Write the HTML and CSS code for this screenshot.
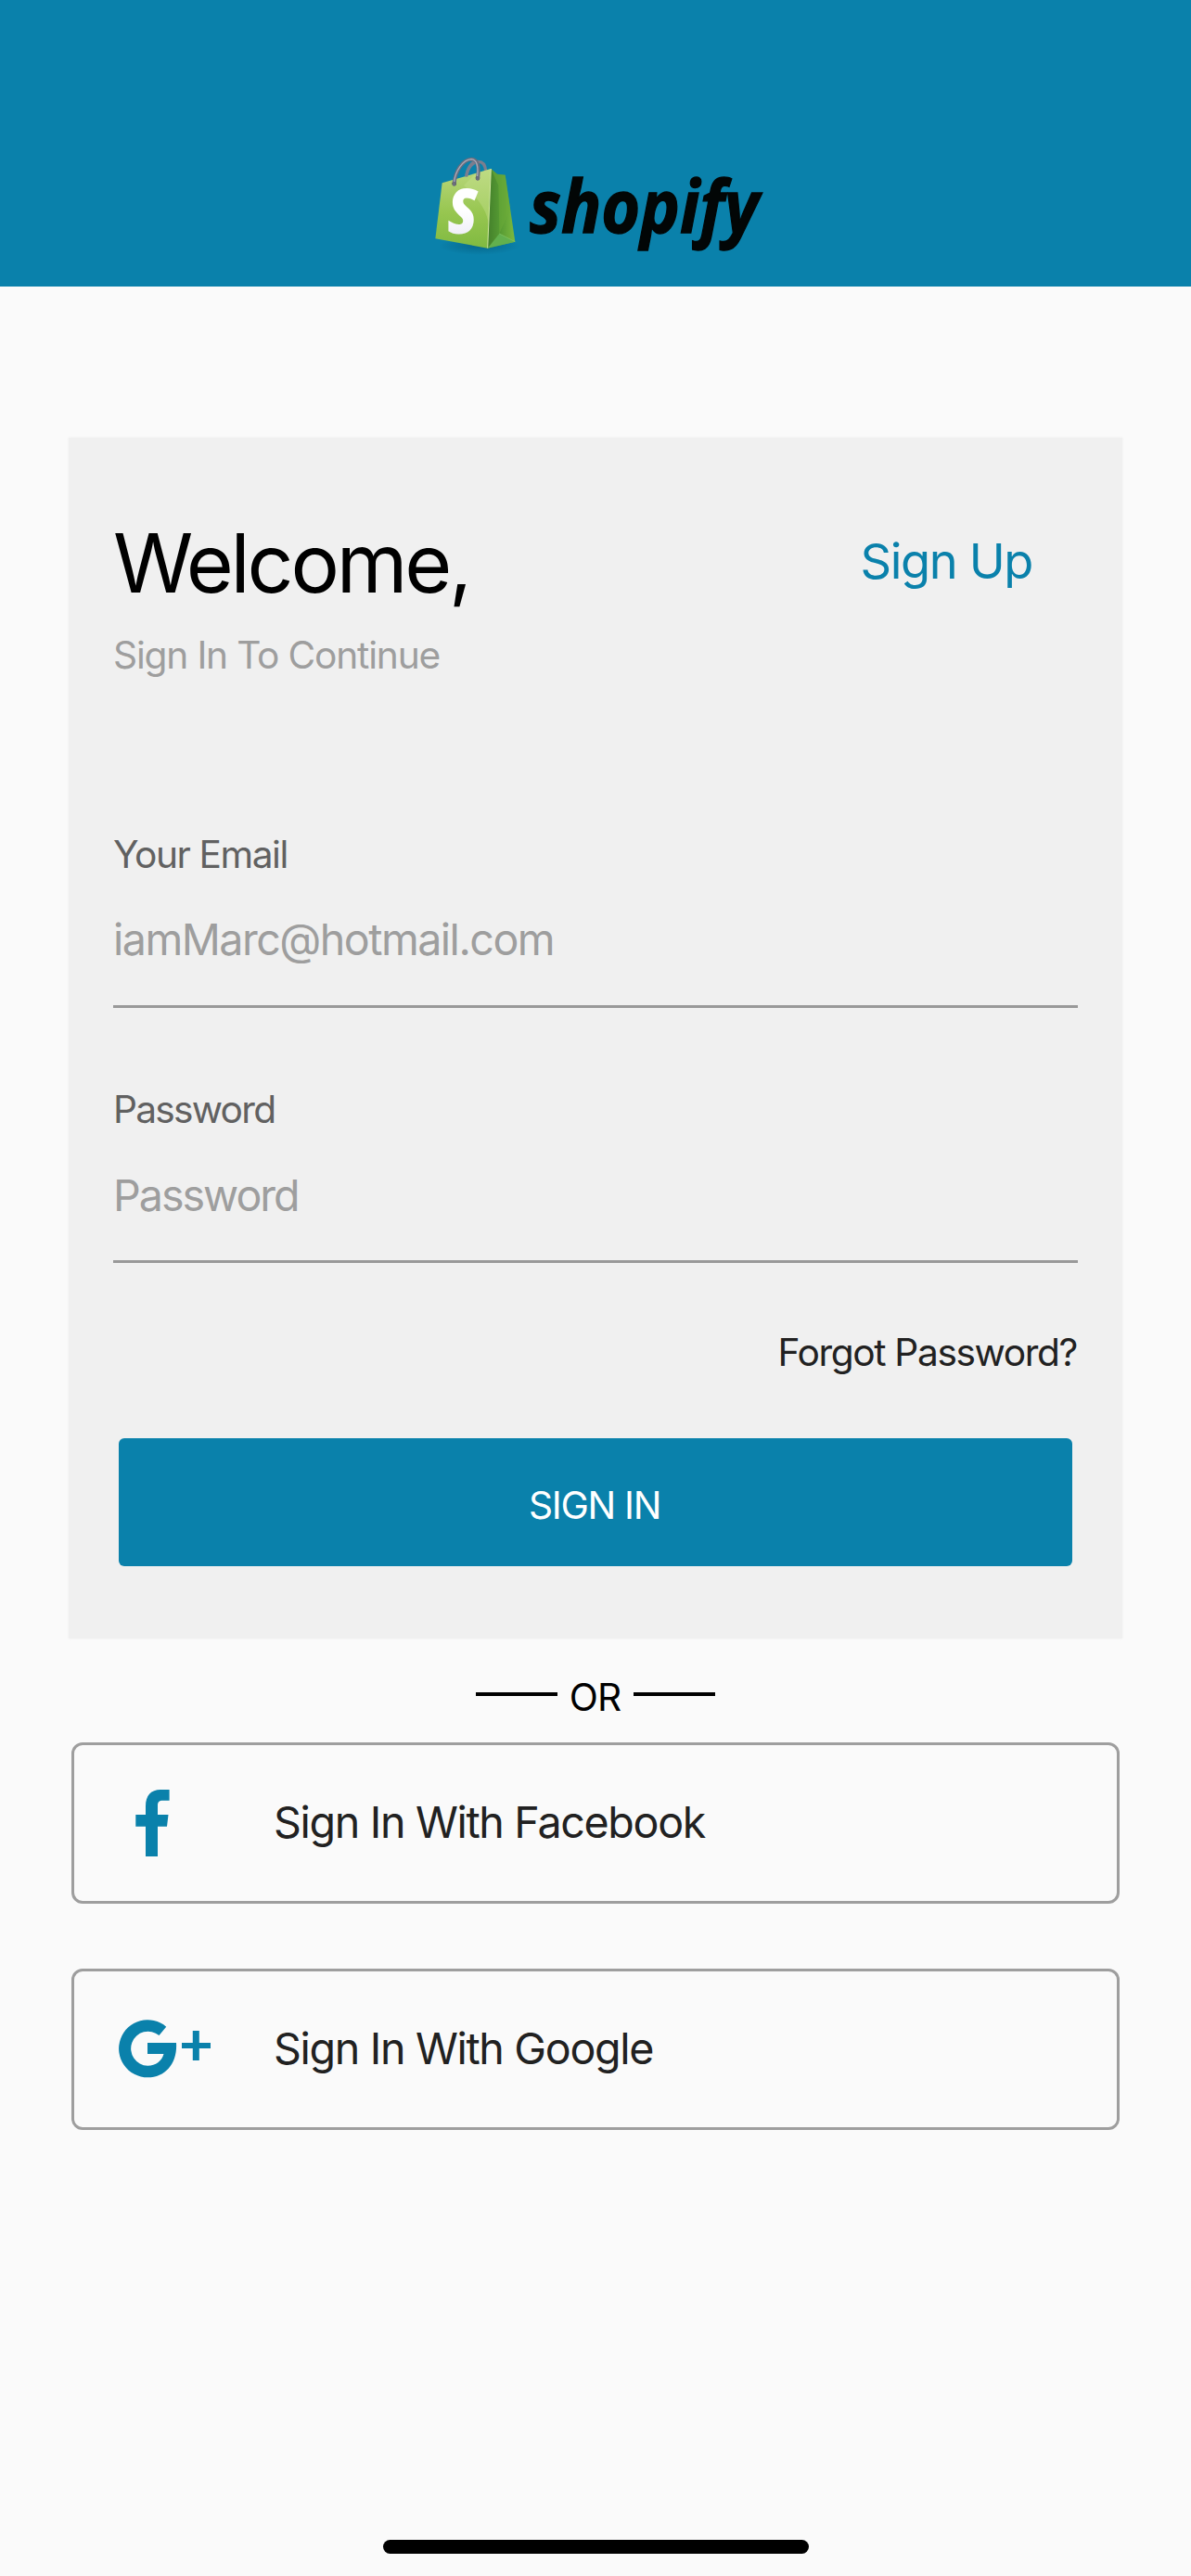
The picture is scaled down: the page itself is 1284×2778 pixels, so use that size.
FILE: index.html
```html
<!DOCTYPE html>
<html lang="en">
<head>
<meta charset="utf-8">
<title>Sign In</title>
<link rel="stylesheet" href="styles.css">
</head>
<body>
<div class="screen">
  <header class="topbar">
    <svg class="logo" viewBox="-24 0 1200 477" role="img" aria-label="shopify">
      <defs>
        <linearGradient id="front" x1="0" y1="0" x2="0" y2="1">
          <stop offset="0" stop-color="#b9d77c"/>
          <stop offset="0.55" stop-color="#97c650"/>
          <stop offset="1" stop-color="#80ba41"/>
        </linearGradient>
        <linearGradient id="side" x1="0" y1="0" x2="1" y2="0">
          <stop offset="0" stop-color="#44802b"/>
          <stop offset="0.45" stop-color="#559a33"/>
          <stop offset="1" stop-color="#7dba3f"/>
        </linearGradient>
        <linearGradient id="letter" x1="0" y1="0" x2="0" y2="1">
          <stop offset="0.5" stop-color="#ffffff"/>
          <stop offset="1" stop-color="#e4e4f2"/>
        </linearGradient>
        <radialGradient id="shade">
          <stop offset="0" stop-color="#04506e" stop-opacity="0.5"/>
          <stop offset="1" stop-color="#04506e" stop-opacity="0"/>
        </radialGradient>
      </defs>
      <ellipse cx="200" cy="345" rx="130" ry="30" fill="url(#shade)"/>
      <path d="M158 122C162 92 180 73 198 73C212 73 219 85 221 102" fill="none" stroke="#7b7e8f" stroke-width="10"/>
      <path d="M80 142L238 96L227 353L58 322Z" fill="url(#front)"/>
      <path d="M150 150C195 190 226 230 231 280L238 96L190 110Z" fill="#c6e08e" opacity="0.4"/>
      <path d="M238 96L258 113L284 116L316 332L227 353Z" fill="url(#side)"/>
      <path d="M238 96L258 113L284 116L300 226L265 306L262 150Z" fill="#6cab38" opacity="0.55"/>
      <path d="M227 353L265 306L316 332Z" fill="#62b04e"/>
      <path d="M265 306L316 332" stroke="#86c765" stroke-width="2"/>
      <path d="M238 96L227 353" stroke="#d5ea9f" stroke-width="3"/>
      <circle cx="119" cy="144" r="7" fill="#3c3434"/>
      <circle cx="195" cy="126" r="7" fill="#3c3434"/>
      <path d="M158 122C161 92 176 73 190 73" fill="none" stroke="#7b7e8f" stroke-width="9"/>
      <path d="M119 146C121 105 146 66 175 65C197 65 200 92 195 128" fill="none" stroke="#6a6d7d" stroke-width="12" stroke-linecap="round"/>
      <path d="M119 138C122 104 147 67 174 65C194 66 197 92 194 120" fill="none" stroke="#a9abba" stroke-width="4"/>
      <text class="bag-letter" x="97" y="307" textLength="98" lengthAdjust="spacingAndGlyphs" fill="url(#letter)">S</text>
      <text class="wordmark" x="363" y="302" textLength="742" lengthAdjust="spacingAndGlyphs">shopify</text>
    </svg>
  </header>

  <main class="content">
    <form class="card">
      <div class="card-head">
        <h1 class="title">Welcome,</h1>
        <a class="signup">Sign Up</a>
      </div>
      <p class="subtitle">Sign In To Continue</p>
      <div class="field">
        <label class="label">Your Email</label>
        <div class="value">iamMarc@hotmail.com</div>
      </div>
      <div class="field">
        <label class="label tight">Password</label>
        <div class="value tight">Password</div>
      </div>
      <a class="forgot">Forgot Password?</a>
      <button type="button" class="submit">SIGN IN</button>
    </form>

    <div class="divider"><span class="rule"></span><span class="or">OR</span><span class="rule"></span></div>

    <button type="button" class="social">
      <svg class="social-icon" viewBox="125 1925 106 80">
        <path fill="#0a81ab" d="M157 2002V1969.700H146.300V1957H157V1948C157 1936 163 1930 173 1930H182.600V1941.700H175.500C171.500 1941.700 170 1943.500 170 1947V1957H181.500L180 1969.700H170V2002Z"/>
      </svg>
      <span class="social-text">Sign In With Facebook</span>
    </button>
    <button type="button" class="social">
      <svg class="social-icon" viewBox="125 2169 106 80">
        <path fill="#0a81ab" d="M159 2203H190C191.500 2224 179 2240.300 159.200 2240.300A31 31 0 1 1 179.200 2185.700L171.500 2195A18.500 18.500 0 1 0 159.200 2227.700C168 2227.700 174.500 2222.500 176.500 2215H159Z"/>
        <path fill="#0a81ab" d="M207.800 2190H214.800V2203H227V2209H214.800V2222H207.800V2209H196V2203H207.800Z"/>
      </svg>
      <span class="social-text">Sign In With Google</span>
    </button>
  </main>

  <div class="home-indicator"></div>
</div>
</body>
</html>
```

FILE: styles.css
```css
* { box-sizing: border-box; }

body {
  margin: 0;
  background: #fafafa;
  font-family: Inter, "Liberation Sans", sans-serif;
  color: #212121;
}

.screen {
  width: 1284px;
  height: 2778px;
  display: flex;
  flex-direction: column;
  overflow: hidden;
}

.topbar {
  height: 309px;
  padding-top: 150px;
  background: #0a81ab;
  display: flex;
  justify-content: center;
}

.logo { width: 400px; height: 159px; overflow: visible; }

.wordmark {
  font: italic 700 235px "Open Sans", "Noto Sans", sans-serif;
  fill: #020606;
  stroke: #020606;
  stroke-width: 4px;
}

.bag-letter { font: italic 800 202px "Open Sans", "Noto Sans", sans-serif; }

.content {
  flex: 1;
  display: flex;
  flex-direction: column;
  padding: 163px 74px 0;
}

.card {
  height: 1295px;
  padding: 82px 48px 78px;
  background: #f0f0f0;
  box-shadow: 0 0 3px #f0f0f0;
  display: flex;
  flex-direction: column;
}

.card-head {
  display: flex;
  justify-content: space-between;
  align-items: center;
  padding-right: 49px;
}

.title {
  margin: 0;
  font-size: 87.6px;
  line-height: 106px;
  letter-spacing: -3.2px;
  font-weight: 400;
  color: #000;
}

.signup {
  margin-bottom: 5px;
  font-size: 52.4px;
  line-height: 64px;
  letter-spacing: -1.4px;
  color: #0a81ab;
}

.subtitle {
  margin: 22px 0 165px;
  font-size: 40.7px;
  line-height: 50px;
  letter-spacing: -1.2px;
  color: #9e9e9e;
}

.field {
  height: 190px;
  border-bottom: 3px solid #999;
}

.field + .field { margin-top: 85px; }

.label {
  display: block;
  font-size: 40.7px;
  line-height: 50px;
  letter-spacing: -1.45px;
  color: #616161;
}

.value {
  margin-top: 37px;
  font-size: 46.6px;
  line-height: 58px;
  letter-spacing: -1.52px;
  color: #9e9e9e;
}

.label.tight { letter-spacing: -1.75px; }
.value.tight { margin-top: 38px; letter-spacing: -2px; }

.forgot {
  align-self: flex-end;
  margin: 72px 1px 67px 0;
  font-size: 40.7px;
  line-height: 50px;
  letter-spacing: -1.38px;
}

.submit {
  height: 138px;
  margin: 0 6px;
  padding: 7px 2px 0 0;
  border: 0;
  border-radius: 6px;
  background: #0a81ab;
  color: #fff;
  font: 400 40.7px/50px Inter, sans-serif;
  letter-spacing: -1.3px;
}

.divider {
  display: flex;
  justify-content: center;
  align-items: center;
  height: 50px;
  margin: 39px 0 23px;
  font-size: 40.7px;
  line-height: 50px;
  letter-spacing: -0.8px;
  color: #000;
}

.rule {
  width: 88px;
  height: 4px;
  margin-bottom: 8px;
  background: #000;
}

.or { width: 82px; padding-right: 1px; text-align: center; }

.social {
  height: 174px;
  margin: 0 3px;
  padding: 0 0 2px 45px;
  border: 3px solid #9e9e9e;
  border-radius: 12px;
  background: none;
  display: flex;
  align-items: center;
  gap: 64px;
  font: 400 46.6px/58px Inter, sans-serif;
  letter-spacing: -1.33px;
  color: #212121;
}

.social + .social { margin-top: 70px; }

.social-icon { width: 106px; height: 80px; }

.home-indicator {
  width: 459px;
  height: 15px;
  margin: 0 412px 24px 413px;
  border-radius: 8px;
  background: #000;
}
```
